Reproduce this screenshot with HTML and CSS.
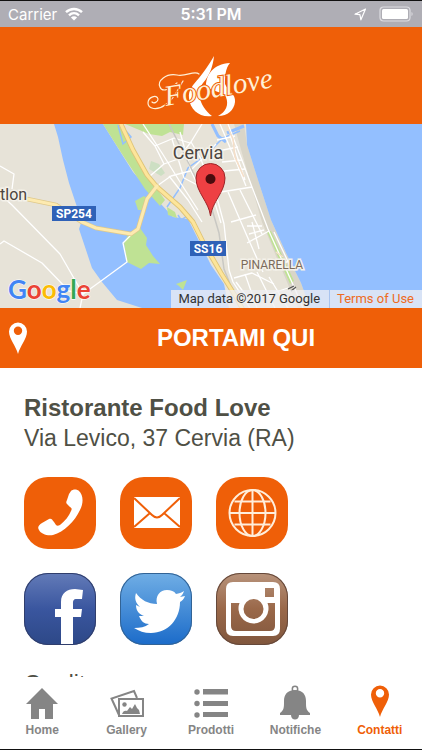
FILE: index.html
```html
<!DOCTYPE html>
<html lang="it">
<head>
    <meta charset="UTF-8">
    <meta name="viewport" content="width=device-width, initial-scale=1.0">
    <title>Food Love - Contatti</title>
    <link rel="stylesheet" href="styles.css">
</head>
<body>
    <div class="status-bar">
        <div class="status-left">
            <span class="carrier">Carrier</span>
            <svg width="18" height="14" viewBox="0 0 18 14" fill="none" stroke="#fff" stroke-width="2.4" aria-hidden="true">
                <path d="M1 5.2C5.500.9 12.500.9 17 5.200"/>
                <path d="M4 8.300C7 5.500 11 5.500 14 8.300"/>
                <path d="M9 13.500L5.900 10.400C7.600 8.900 10.400 8.900 12.100 10.400Z" fill="#fff" stroke="none"/>
            </svg>
        </div>
        <span class="clock">5:31 PM</span>
        <div class="status-right">
            <svg width="13" height="13" viewBox="0 0 13 13" fill="none" stroke="#fff" stroke-width="1.2" stroke-linejoin="round" aria-hidden="true">
                <path d="M11.500 1L1 6.200L5.900 6.700L6.900 11.800Z"/>
            </svg>
            <svg width="35" height="16" viewBox="0 0 35 16" aria-hidden="true">
                <rect x="1" y="1" width="30" height="14" rx="3.500" fill="none" stroke="#dddce1" stroke-width="1.200"/>
                <rect x="3" y="3" width="26" height="10" rx="1.500" fill="#fff"/>
                <path d="M32.500 6C34 6.600 34 9.400 32.500 10Z" fill="#dddce1"/>
            </svg>
        </div>
    </div>

    <header class="header">
        <svg class="logo" width="130" height="64" viewBox="0 0 130 64" role="img" aria-label="Foodlove">
            <g fill="#fff">
                <path d="M68 1C67 11 64 20 57 28C51 36 52 50 66 61C54 63 44 55 43 43C42 35 47 30 53 23C57 18 63 10 68 1Z"/>
                <path d="M84 8C79 14 79 22 79 29C82 36 90 39 89 47C88 55 82 61 72 61C80 57 83 50 80 42C76 36 66 37 60 31C60 20 67 9 84 8Z"/>
            </g>
            <g fill="none" stroke="#fff0d6" stroke-width="1.200" stroke-linecap="round">
                <path d="M53 19C48 15 40 22 31 20C20 18 11 26 14 32C16 38 25 34 31 28"/>
                <path d="M37 26C32 34 28 45 19 50C11 56 2 54 2 48C2 42 11 39 12 44C12 47 8 49 6 47"/>
            </g>
            <text class="logo-text" x="20" y="51" transform="rotate(-10 20 51)">Foodlove</text>
        </svg>
    </header>

    <main class="content">
        <section class="map">
            <svg class="map-canvas" viewBox="0 0 422 184" preserveAspectRatio="xMidYMid slice" role="img" aria-label="Cervia">
                <rect width="422" height="184" fill="#e7e3d8"/>
                <!-- laguna -->
                <path fill="#93bfff" d="M54 0L58 13L63 36L69 59L77 83L82 96L79 105L92 144L102 158L117 176L142 184H229L224 160L211 141L197 113L188 95L173 93L160 79L133 48L103 0Z"/>
                <!-- mare -->
                <path fill="#d9d5c8" d="M234 0H244L247 21L258 56L271 96L286 129L301 159L310 184H298L276 132L262 98L250 57L240 22Z"/>
                <path fill="#93bfff" d="M246 0L247 21L258 56L271 96L286 129L301 159L310 184H422V0Z"/>
                <!-- verde -->
                <g fill="#bfe294">
                    <path d="M103 0H118L133 26L147 51L165 76L160 82L145 65L122 30Z"/>
                    <path d="M125 0H184L183 11L170 8L162 12L149 10Z"/>
                    <path d="M135 77L144 72L149 76L144 86H138Z"/>
                    <path d="M128 111L140 104L147 114L146 121L153 132L160 140L149 139L141 145L127 138L124 119Z"/>
                    <path d="M176 160L187 156L183 166L179 162Z"/>
                    <path d="M167 83L175 88L177 94L168 91Z"/>
                    <path d="M267 108L271 107L294 157L290 160Z"/>
                </g>
                <path fill="#cddfc3" d="M151 37L159 40L165 49L161 52L149 45Z"/>
                <!-- canali -->
                <g fill="none" stroke="#93bfff" stroke-width="1.500">
                    <path d="M118 1L123 20L131 13L126 7M167 83L180 64L188 44L206 31L223 14L240 7"/>
                    <path d="M212 0L218 12L226 18M227 9L244 2" stroke-width="3"/>
                    <path d="M178 91L181 96L187 92"/>
                </g>
                <!-- strade minori -->
                <g fill="none" stroke="#fff" stroke-width="1.300" stroke-linejoin="round">
                    <path d="M0 42L14 50L12 65M0 70L12 81L60 130L83 170L80 184M0 120L4 117L42 139L69 167L83 170L101 157L127 138L123 119L131 111"/>
                    <path d="M157 62L171 52L190 47L206 31L216 20M150 52L164 40L155 22L143 8M164 40L178 35L191 18L202 0M155 22L174 14L190 19"/>
                    <path d="M143 0L162 29L180 58L198 86M169 52L188 76L202 98M191 18L201 35L211 66L221 99M180 8L191 47L204 74M172 15L184 54L201 63"/>
                    <path d="M202 72L221 68L252 63L268 105L295 165L303 184M216 70L224 100L229 146L233 158L250 184M252 63L243 39L228 0"/>
                    <path d="M220 0L237 40L246 62M217 16L235 12M218 27L238 23M222 38L242 36M224 47L245 45M230 11L245 56M228 68L247 112L263 148M240 66L262 110M231 98L256 91M247 119L269 107M234 154L252 149L274 160M247 102H262M249 110L264 106M252 98L259 125M274 108L292 146"/>
                    <path d="M245 150L257 184M257 148L275 184M269 153L288 184M236 158L247 173M242 179L288 164M272 142L290 137"/>
                </g>
                <g fill="none" stroke="#f6dfc8" stroke-width="1.500">
                    <path d="M226 0L233 15L235 33L244 53M276 128L283 133"/>
                </g>
                <!-- ferrovia -->
                <path d="M169 0L193 48L211 82L219 109L224 145L230 160" fill="none" stroke="#c9c8c3" stroke-width="1.500"/>
                <!-- strade principali -->
                <g fill="none" stroke-linejoin="round" stroke-linecap="round">
                    <path d="M120 -2L133 26L147 51L157 63L180 83L193 98L203 118L221 149L236 173L243 186" stroke="#dfc477" stroke-width="5"/>
                    <path d="M27 75L56 81L82 98L96 104L131 110L138 105L147 75L157 62" stroke="#dfc98b" stroke-width="4.500"/>
                    <path d="M120 -2L133 26L147 51L157 63L180 83L193 98L203 118L221 149L236 173L243 186" stroke="#fde59a" stroke-width="3.200"/>
                    <path d="M27 75L56 81L82 98L96 104L131 110L138 105L147 75L157 62" stroke="#fdeab0" stroke-width="3"/>
                </g>
                <path d="M288 165L294 162M291 167L296 163" stroke="#555" stroke-width="1.200"/>
                <!-- etichette -->
                <rect x="52" y="82" width="44" height="15" fill="#2f61b7"/>
                <rect x="190" y="117" width="36" height="15" fill="#2f61b7"/>
                <text class="road-label" x="74" y="94">SP254</text>
                <text class="road-label" x="208" y="129">SS16</text>
                <text class="town-label" x="198" y="35">Cervia</text>
                <text class="place-label" x="0" y="76">tlon</text>
                <text class="area-label" x="272" y="145">PINARELLA</text>
                <!-- segnaposto -->
                <path d="M210.500 92C209 78 196 68 196 54A14.500 14.500 0 0 1 225 54C225 68 212 78 210.500 92Z" fill="#ee4043" stroke="#9e2427"/>
                <circle cx="210.500" cy="55" r="5" fill="#4a0c0e"/>
            </svg>
            <div class="google" aria-label="Google"><span class="blue">G</span><span class="red">o</span><span class="yellow">o</span><span class="blue">g</span><span class="green">l</span><span class="red">e</span></div>
            <div class="map-credits">
                <span class="map-data">Map data ©2017 Google</span>
                <a class="map-terms" href="#termini">Terms of Use</a>
            </div>
        </section>

        <button class="directions" type="button">
            <svg width="20" height="32" viewBox="0 0 20 32" fill="#fff" fill-rule="evenodd" aria-hidden="true">
                <path d="M10 32C8 24 1 17 1 9.500A9 9 0 0 1 19 9.500C19 17 12 24 10 32ZM10 4.500A4.200 4.200 0 1 0 10 12.900A4.200 4.200 0 1 0 10 4.500Z"/>
            </svg>
            <span>PORTAMI QUI</span>
        </button>

        <section class="info">
            <h1 class="name">Ristorante Food Love</h1>
            <p class="address">Via Levico, 37 Cervia (RA)</p>
            <div class="links">
                <a class="tile" href="#telefono" aria-label="Telefono">
                    <svg viewBox="0 0 72 72" fill="#fff">
                        <path d="M47 14C49 12 53 12 55 14C59 18 60 25 56 33C51 44 40 55 29 58C23 59 17 57 15 53C13 50 15 48 18 46L25 42C27 41 28 42 30 45L32 48C33 49 34 49 36 48C41 44 45 39 47 34C48 32 48 31 46 30L43 27C42 26 42 25 43 23L45 17Z"/>
                    </svg>
                </a>
                <a class="tile" href="#email" aria-label="Email">
                    <svg viewBox="0 0 72 72">
                        <rect x="14" y="20" width="46" height="31" fill="#fff"/>
                        <path d="M14 21L32 38Q37 43 42 38L60 21M14 50L30 36M60 50L44 36" fill="none" stroke="#ef5f08" stroke-width="2"/>
                    </svg>
                </a>
                <a class="tile" href="#sito" aria-label="Sito web">
                    <svg viewBox="0 0 72 72" fill="none" stroke="#ffeedb" stroke-width="2">
                        <circle cx="36.500" cy="36" r="23"/>
                        <ellipse cx="36.500" cy="36" rx="13" ry="23"/>
                        <path d="M36.500 13V59M18.500 24.500H54.500M13.500 36H59.500M18.500 47.500H54.500"/>
                    </svg>
                </a>
                <a class="tile facebook" href="#facebook" aria-label="Facebook">
                    <svg viewBox="0 0 72 72" fill="#fff">
                        <path d="M37 71V44H31V36H37V29C37 20 43 16 51 16L59 17L58 26H53C49 26 49 28 49 31V36H58L57 44H49V71Z"/>
                    </svg>
                </a>
                <a class="tile twitter" href="#twitter" aria-label="Twitter">
                    <svg viewBox="0 0 72 72" fill="#fff">
                        <path d="M16 20C21 27 28 31 37 31C35 23 40 17 47 17C51 17 54 18 56 21C59 20 61 20 64 18C63 21 62 22 60 24L65 23C64 26 62 28 60 29C60 46 48 60 31 60C24 60 19 58 14 55C20 55 25 54 29 51C24 51 21 48 19 43L24 43C19 41 16 38 16 32L20 34C16 30 14 26 16 20Z"/>
                    </svg>
                </a>
                <a class="tile instagram" href="#instagram" aria-label="Instagram">
                    <svg viewBox="0 0 72 72">
                        <path fill="#fff" fill-rule="evenodd" d="M17 9H57Q64 9 64 16V56Q64 63 57 63H17Q10 63 10 56V16Q10 9 17 9ZM49 15V24H58V15ZM15 30V53Q15 58 20 58H54Q59 58 59 53V30H51.500A15 15 0 1 1 23.500 30ZM37.500 26A10 10 0 1 0 37.500 46A10 10 0 1 0 37.500 26Z"/>
                    </svg>
                </a>
            </div>
            <h2 class="credits">Credits</h2>
        </section>
    </main>

    <nav class="tab-bar">
        <a class="tab" href="#home">
            <svg width="34" height="34" viewBox="0 0 34 34" fill="#858585" aria-hidden="true">
                <path d="M17 1L33 17H28V32H20V22H14V32H6V17H1Z"/>
            </svg>
            <span>Home</span>
        </a>
        <a class="tab" href="#gallery">
            <svg width="34" height="34" viewBox="0 0 34 34" fill="none" stroke="#858585" stroke-width="2" aria-hidden="true">
                <path d="M9 28L1.500 11.500L24 4L27 11"/>
                <rect x="9" y="12" width="24" height="17"/>
                <circle cx="14.500" cy="17.500" r="2.200" fill="#858585" stroke="none"/>
                <path d="M12 27C13 24 15 23 17 24L20 20L22 22L25 17L27 21L29 23L30 27Z" fill="#858585" stroke="none"/>
            </svg>
            <span>Gallery</span>
        </a>
        <a class="tab" href="#prodotti">
            <svg width="34" height="34" viewBox="0 0 34 34" fill="#858585" aria-hidden="true">
                <circle cx="3" cy="5" r="2.700"/><rect x="9" y="2" width="25" height="5.500"/>
                <circle cx="3" cy="16.500" r="2.700"/><rect x="9" y="14" width="25" height="5"/>
                <circle cx="3" cy="28" r="2.700"/><rect x="9" y="25" width="25" height="5"/>
            </svg>
            <span>Prodotti</span>
        </a>
        <a class="tab" href="#notifiche">
            <svg width="34" height="36" viewBox="0 0 34 36" fill="#858585" aria-hidden="true">
                <circle cx="17" cy="4" r="2.700" fill="none" stroke="#858585" stroke-width="1.500"/>
                <path d="M17 5C25 5 28 10 28 16C28 23 28 25 32 28V30H21C21 36 13 36 13 30H2V28C6 25 6 23 6 16C6 10 9 5 17 5Z"/>
            </svg>
            <span>Notifiche</span>
        </a>
        <a class="tab active" href="#contatti" aria-current="page">
            <svg width="20" height="36" viewBox="0 0 20 36" fill="#ef5f08" fill-rule="evenodd" aria-hidden="true">
                <path d="M10 32C8 24 1 17 1 9.500A9 9 0 0 1 19 9.500C19 17 12 24 10 32ZM10 4A4.200 4.200 0 1 0 10 12.400A4.200 4.200 0 1 0 10 4Z"/>
            </svg>
            <span>Contatti</span>
        </a>
    </nav>
</body>
</html>
```
FILE: styles.css
```css
* {
    box-sizing: border-box;
}
body {
    display: flex;
    flex-direction: column;
    height: 100vh;
    margin: 0;
    background: #fff;
    color: #4f5045;
    font-family: "Liberation Sans", Arial, sans-serif;
    border-top: 1px solid #111;
    border-bottom: 1px solid #111;
}
a {
    text-decoration: none;
}

/* barra di stato */
.status-bar {
    display: grid;
    grid-template-columns: 1fr auto 1fr;
    align-items: center;
    flex: none;
    height: 26px;
    padding: 0 8px;
    background: #afaeb5;
    color: #fff;
    font-family: Inter, Roboto, sans-serif;
    font-size: 15px;
}
.status-left,
.status-right {
    display: flex;
    align-items: center;
    gap: 8px;
}
.status-right {
    justify-content: flex-end;
    gap: 12px;
}
.clock {
    font-size: 16px;
    font-weight: 600;
}

/* testata */
.header {
    display: flex;
    justify-content: center;
    flex: none;
    height: 97px;
    padding-top: 28px;
    background: #ef5f08;
}
.logo {
    overflow: visible;
}
.logo-text {
    font-family: "Liberation Serif", serif;
    font-style: italic;
    font-size: 29px;
    fill: #fff0d6;
    stroke: #ef5f08;
    stroke-width: 2px;
    paint-order: stroke;
}

.content {
    flex: 1;
    min-height: 0;
    overflow-y: auto;
    scrollbar-width: none;
}

/* mappa */
.map {
    position: relative;
    height: 184px;
    overflow: hidden;
}
.map-canvas {
    display: block;
    width: 100%;
    height: 100%;
    font-family: Roboto, sans-serif;
}
.town-label,
.place-label,
.area-label {
    fill: #4c4540;
    stroke: #f4f1e9;
    stroke-width: 3px;
    paint-order: stroke;
}
.town-label {
    font-size: 18px;
    text-anchor: middle;
}
.place-label {
    font-size: 16px;
}
.area-label {
    font-size: 12px;
    fill: #7b6b5c;
    text-anchor: middle;
}
.road-label {
    font-size: 12px;
    font-weight: 700;
    fill: #fff;
    text-anchor: middle;
}
.google {
    position: absolute;
    left: 8px;
    bottom: 0;
    font-family: Lato, sans-serif;
    font-size: 26px;
    font-weight: 700;
    line-height: 38px;
    -webkit-text-stroke: 1px #fff;
    paint-order: stroke;
}
.blue {
    color: #4285f4;
}
.red {
    color: #ea4335;
}
.yellow {
    color: #fbbc05;
}
.green {
    color: #34a853;
}
.map-credits {
    position: absolute;
    right: 0;
    bottom: 0;
    display: flex;
    font-family: Roboto, sans-serif;
    font-size: 13px;
    line-height: 18px;
}
.map-data,
.map-terms {
    padding: 0 8px 0 7px;
    background: rgba(239, 239, 243, 0.75);
    color: #333;
}
.map-data {
    padding-right: 9px;
}
.map-terms {
    border-left: 1px solid #a9c4ee;
    color: #ee6b22;
}

.directions {
    display: grid;
    grid-template-columns: 20px 1fr;
    align-items: center;
    gap: 30px;
    width: 100%;
    height: 60px;
    padding: 0 8px;
    border: 0;
    background: #ef5f08;
    color: #fff;
    font-family: inherit;
    font-size: 24px;
    font-weight: 700;
    cursor: pointer;
}

/* dati del ristorante */
.info {
    padding: 25px 24px;
}
.name,
.address,
.credits {
    margin: 0;
    font-size: 24px;
    line-height: 30px;
}
.address,
.credits {
    font-size: 23px;
    font-weight: 400;
}
.links {
    display: grid;
    grid-template-columns: repeat(3, 72px);
    gap: 24px;
    margin: 24px 0;
}
.tile {
    display: block;
    height: 72px;
    border-radius: 24px;
    background: #ef5f08;
}
.tile svg {
    display: block;
}
.facebook {
    background: linear-gradient(#637bb8, #3a569f 50%, #2d4887);
    box-shadow: inset 0 0 0 1px #303e6c;
}
.twitter {
    background: linear-gradient(#70aee5, #1b6bc9);
    box-shadow: inset 0 0 0 1px #326395;
}
.instagram {
    background: linear-gradient(#b8937b, #9a6849 50%, #80563d);
    box-shadow: inset 0 0 0 1px #65483a;
}

/* menu in basso */
.tab-bar {
    display: grid;
    grid-template-columns: repeat(5, 1fr);
    flex: none;
    height: 72px;
    background: #fff;
}
.tab {
    display: flex;
    flex-direction: column;
    align-items: center;
    justify-content: flex-end;
    padding-bottom: 10px;
    color: #858585;
    font-size: 12px;
    font-weight: 700;
    line-height: 18px;
}
.active {
    color: #ef5f08;
}
```
